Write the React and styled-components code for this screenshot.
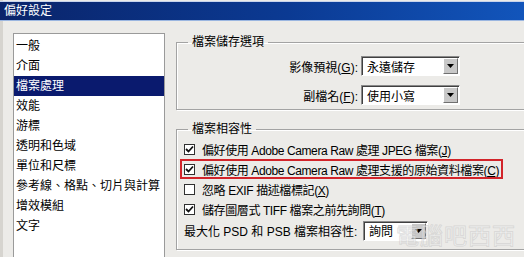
import React from 'react'
import styled, { createGlobalStyle } from 'styled-components'

const Global = createGlobalStyle`
  html, body { margin: 0; padding: 0; background: #ecebe8; }
  body { font-family: "Liberation Sans", "Noto Sans CJK TC", sans-serif; font-size: 12px; }
`

const font = `12px "Liberation Sans", "Noto Sans CJK TC", sans-serif`

const items = ['一般', '介面', '檔案處理', '效能', '游標', '透明和色域', '單位和尺標', '參考線、格點、切片與計算', '增效模組', '文字']

const checks = [
  { label: '偏好使用 Adobe Camera Raw 處理 JPEG 檔案', key: 'J', on: true },
  { label: '偏好使用 Adobe Camera Raw 處理支援的原始資料檔案', key: 'C', on: true, mark: true },
  { label: '忽略 EXIF 描述檔標記', key: 'X', on: false },
  { label: '儲存圖層式 TIFF 檔案之前先詢問', key: 'T', on: true },
]

function App() {
  return (
    <Window>
      <Global />
      <TitleBar>偏好設定</TitleBar>
      <Body>
        <List>
          {items.map((t, i) => (
            <Item key={t} selected={i === 2}>{t}</Item>
          ))}
        </List>
        <Right>
          <Group top={2} height={75}>
            <Legend>檔案儲存選項</Legend>
            <FieldRow gap={7}>
              <Label>影像預視(<u>G</u>):</Label>
              <Select width={99}><span>永遠儲存</span><Arrow /></Select>
            </FieldRow>
            <FieldRow gap={9}>
              <Label>副檔名(<u>F</u>):</Label>
              <Select width={99}><span>使用小寫</span><Arrow /></Select>
            </FieldRow>
          </Group>
          <Group top={12} height={128}>
            <Legend>檔案相容性</Legend>
            <Checks>
              {checks.map(c => (
                <CheckRow key={c.key} mark={c.mark}>
                  <Box>{c.on && <Tick />}</Box>
                  <CheckText>{c.label}(<u>{c.key}</u>)</CheckText>
                </CheckRow>
              ))}
            </Checks>
            <MaxRow>
              <MaxLabel>最大化 PSD 和 PSB 檔案相容性:</MaxLabel>
              <Select width={65}><span>詢問</span><Arrow /></Select>
              <Watermark>電腦吧西西</Watermark>
            </MaxRow>
          </Group>
        </Right>
      </Body>
    </Window>
  )
}

export default App

function Tick() {
  return (
    <svg width="9" height="9" viewBox="0 0 9 9">
      <path d="M1 4 L3.5 6.5 L8 1.5" stroke="#111" strokeWidth="1.8" fill="none" />
    </svg>
  )
}

function Arrow() {
  return (
    <ArrowBtn>
      <svg width="7" height="4" viewBox="0 0 7 4"><path d="M0 0 H7 L3.5 4 Z" fill="#000" /></svg>
    </ArrowBtn>
  )
}

const Window = styled.div`
  width: 524px;
  height: 257px;
  overflow: hidden;
  background: #ecebe8;
  display: flex;
  flex-direction: column;
  box-shadow: inset 3px 0 0 #d6d4cf;
`
const TitleBar = styled.div`
  height: 18px;
  margin-top: 1px;
  padding-left: 4px;
  background: linear-gradient(90deg, #0a246a 0%, #0b3a93 55%, #1255bb 100%);
  color: #fff;
  font: ${font};
  line-height: 18px;
  border-top: 1px solid #c8d4ec;
  border-bottom: 1px solid #9bb6e0;
`
const Body = styled.div`
  display: flex;
  align-items: flex-start;
  padding: 12px 0 0 13px;
  gap: 11px;
  flex: 1;
`
const List = styled.div`
  width: 150px;
  height: 240px;
  flex-shrink: 0;
  background: #fff;
  border: 1px solid #9a9a9a;
  padding-top: 2px;
`
const Item = styled.div`
  height: 20px;
  padding-left: 2px;
  font: ${font};
  line-height: 20px;
  color: ${p => (p.selected ? '#fff' : '#000')};
  background: ${p => (p.selected ? '#0a1a6e' : 'transparent')};
  white-space: nowrap;
`
const Right = styled.div`
  display: flex;
  flex-direction: column;
  width: 380px;
  flex-shrink: 0;
`
const Group = styled.fieldset`
  margin: ${p => p.top}px 0 0 0;
  height: ${p => p.height}px;
  box-sizing: border-box;
  border: 1px solid #a3a3a3;
  box-shadow: 1px 1px 0 #fff, inset 1px 1px 0 #fff;
  padding: 0;
  min-width: 0;
`
const Legend = styled.legend`
  margin-left: 11px;
  padding: 0 4px;
  font: ${font};
  line-height: 14px;
`
const FieldRow = styled.div`
  display: flex;
  align-items: center;
  gap: 3px;
  height: 20px;
  margin-top: ${p => p.gap}px;
`
const Label = styled.div`
  width: 181px;
  text-align: right;
  font: ${font};
`
const Select = styled.div`
  width: ${p => p.width}px;
  height: 20px;
  box-sizing: border-box;
  background: #fff;
  border: 1px solid;
  border-color: #8a8a8a #fff #fff #8a8a8a;
  box-shadow: inset 1px 1px 0 #404040;
  display: flex;
  align-items: center;
  justify-content: space-between;
  font: ${font};
  span { padding-left: 5px; }
`
const ArrowBtn = styled.div`
  width: 15px;
  height: 16px;
  margin-right: 1px;
  box-sizing: border-box;
  background: #c8c8c8;
  border: 1px solid;
  border-color: #fff #707070 #707070 #fff;
  display: flex;
  align-items: center;
  justify-content: center;
`
const Checks = styled.div`
  display: flex;
  flex-direction: column;
  padding: 3px 0 0 7px;
`
const CheckRow = styled.div`
  position: relative;
  display: flex;
  align-items: center;
  gap: 7px;
  height: 20px;
  width: 319px;
  &::after {
    content: '';
    display: ${p => (p.mark ? 'block' : 'none')};
    position: absolute;
    left: -4px;
    right: 0;
    top: 0;
    bottom: 0;
    border: 2px solid #d2242a;
  }
`
const Box = styled.div`
  width: 11px;
  height: 11px;
  flex-shrink: 0;
  box-sizing: border-box;
  background: #fff;
  border: 1px solid #303030;
  display: flex;
  align-items: center;
  justify-content: center;
`
const CheckText = styled.div`
  font: ${font};
  letter-spacing: -0.4px;
  white-space: nowrap;
`
const MaxRow = styled.div`
  position: relative;
  display: flex;
  align-items: center;
  gap: 3px;
  margin: 0 0 0 7px;
  height: 23px;
`
const MaxLabel = styled.div`
  width: 176px;
  font: ${font};
  white-space: nowrap;
`
const Watermark = styled.div`
  position: absolute;
  left: 212px;
  top: -2px;
  font: 23px "Noto Sans CJK TC", sans-serif;
  color: rgba(255, 255, 255, 0.5);
  -webkit-text-stroke: 1px rgba(180, 180, 180, 0.4);
  letter-spacing: 1px;
  white-space: nowrap;
`
